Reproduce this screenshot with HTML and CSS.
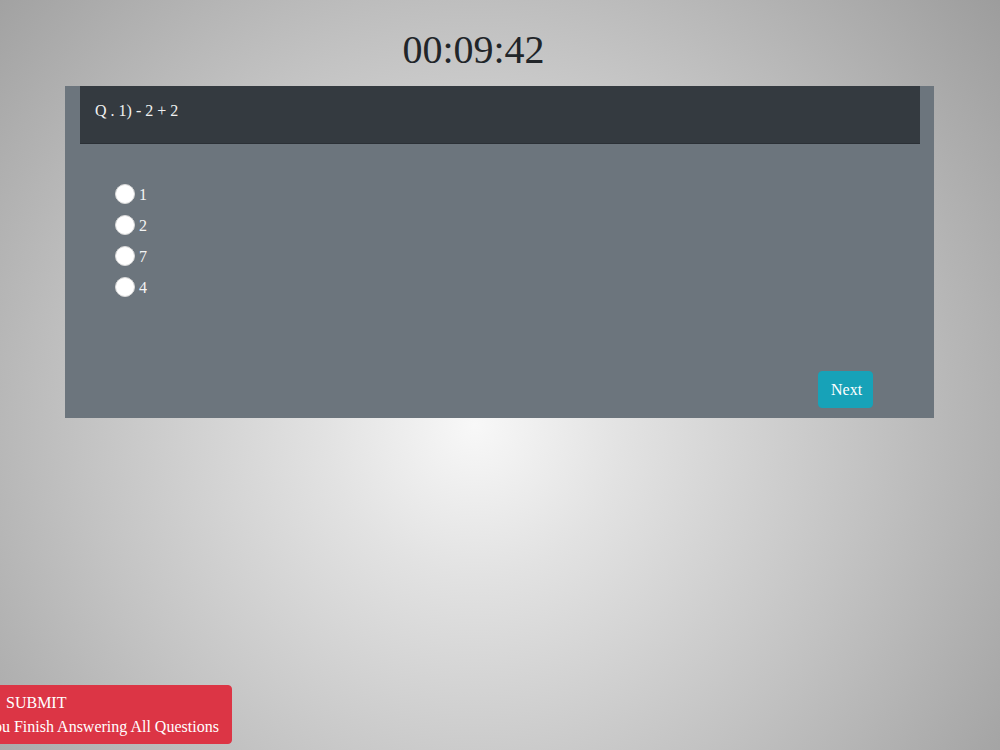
FILE: index.html
```html
<!DOCTYPE html>
<html lang="en">
<head>
<meta charset="utf-8">
<title>Quiz</title>
<link rel="stylesheet" href="styles.css">
</head>
<body>
<div class="page">
  <div class="timer">00:09:42</div>
  <div class="card">
    <div class="card-header">Q . 1) - 2 + 2</div>
    <div class="card-body">
      <label class="option"><input type="radio" name="q1" value="1"><span>1</span></label>
      <label class="option"><input type="radio" name="q1" value="2"><span>2</span></label>
      <label class="option"><input type="radio" name="q1" value="7"><span>7</span></label>
      <label class="option"><input type="radio" name="q1" value="4"><span>4</span></label>
    </div>
    <div class="card-footer">
      <button class="btn btn-next" type="button">Next</button>
    </div>
  </div>
</div>
<button class="btn btn-submit" type="button"><span class="line1">SUBMIT</span><span class="line2">You Finish Answering All Questions</span></button>
</body>
</html>
```

FILE: styles.css
```css
html, body {
  margin: 0;
  padding: 0;
  height: 100%;
}
body {
  font-family: "Liberation Serif", "Times New Roman", serif;
  font-size: 16px;
  line-height: 24px;
  color: #212529;
  background: radial-gradient(circle at 475px 425px, #f8f8f8 0, #e2e2e2 150px, #c3c3c3 390px, #9c9c9c 680px);
  background-attachment: fixed;
  overflow: hidden;
}
.page {
  padding: 26px 66px 0 65px;
}
.timer {
  font-size: 40px;
  line-height: 48px;
  height: 48px;
  margin-bottom: 12px;
  text-align: center;
  padding-right: 52px;
  color: #212529;
}
.card {
  background: #6c757d;
  display: flex;
  flex-direction: column;
}
.card-header {
  margin: 0 14px 0 15px;
  background: #343a40;
  color: #f1f1f1;
  padding: 13px 15px 20px;
  border-bottom: 1px solid #2b3036;
}
.card-body {
  display: flex;
  flex-direction: column;
  padding: 34px 50px 0;
  height: 193px;
}
.option {
  display: flex;
  align-items: center;
  height: 31px;
  color: #f4f4f4;
}
.option input {
  appearance: none;
  -webkit-appearance: none;
  width: 20px;
  height: 20px;
  margin: 0 4px 0 0;
  border-radius: 50%;
  background: #ffffff;
  border: 1px solid #d8d8d8;
  box-sizing: border-box;
}
.option span {
  position: relative;
  top: 1px;
}
.card-footer {
  display: flex;
  justify-content: flex-end;
  padding: 0 61px 10px 0;
}
.btn {
  font-family: "Liberation Serif", "Times New Roman", serif;
  font-size: 16px;
  line-height: 24px;
  border: 1px solid transparent;
  border-radius: 4px;
  color: #ffffff;
  cursor: pointer;
}
.btn-next {
  background: #17a2b8;
  border-color: #17a2b8;
  padding: 6px 12px;
  width: 55px;
  height: 37px;
}
.btn-submit {
  position: fixed;
  left: -29px;
  bottom: 6px;
  background: #dc3545;
  border-color: #dc3545;
  padding: 5px 12px 6px;
  display: flex;
  flex-direction: column;
  justify-content: flex-start;
  align-items: flex-start;
  text-align: left;
  height: 59px;
}
.btn-submit .line1 {
  padding-left: 22px;
}
```
